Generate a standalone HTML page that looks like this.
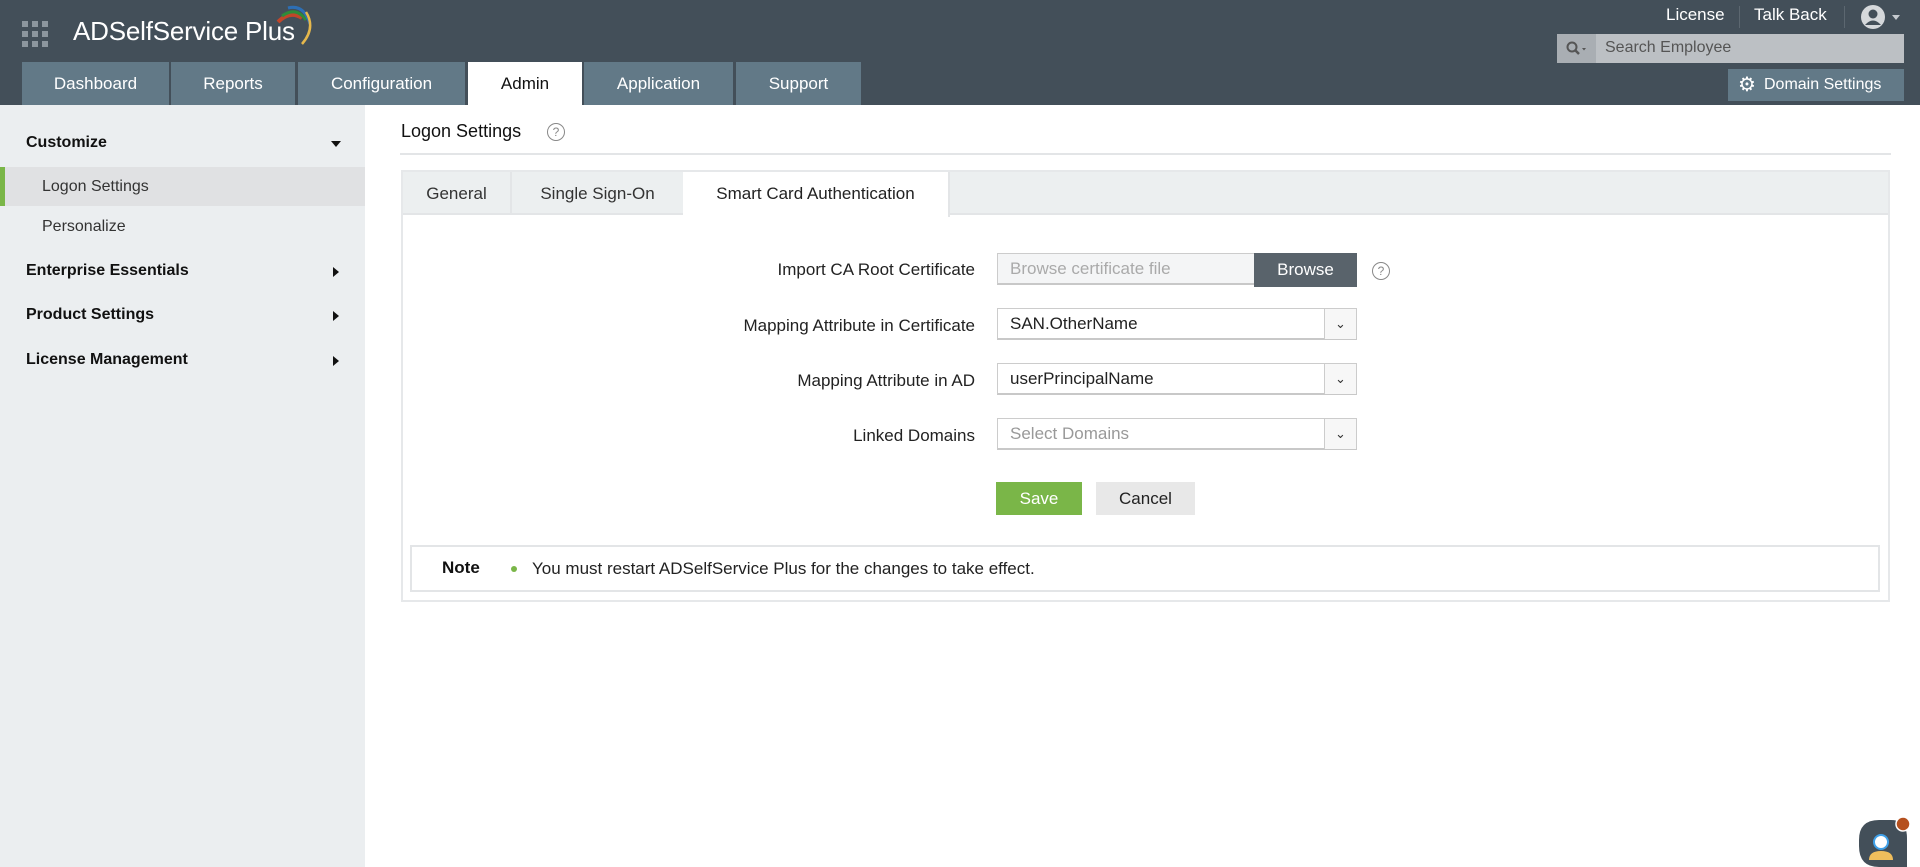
<!DOCTYPE html>
<html><head><meta charset="utf-8"><style>
*{box-sizing:border-box;margin:0;padding:0}
body{width:1920px;height:867px;overflow:hidden;font-family:"Liberation Sans",sans-serif;background:#fff;position:relative;color:#222}
.a{position:absolute}
#hdr{left:0;top:0;width:1920px;height:105px;background:#434f59}
.tab{position:absolute;top:62px;height:43px;background:#627987;color:#fff;font-size:17px;line-height:43px;text-align:center}
.side{left:0;top:105px;width:365px;height:762px;background:#ebeef0}
.si{position:absolute;left:26px;font-size:16px;font-weight:bold;color:#111}
.sub{position:absolute;left:42px;font-size:16px;color:#333}
.arr{position:absolute;left:333px;width:0;height:0;border-top:5px solid transparent;border-bottom:5px solid transparent;border-left:6px solid #111}
.lbl{position:absolute;right:945px;font-size:17px;color:#222;text-align:right;white-space:nowrap}
.inp{position:absolute;left:997px;width:360px;height:32px;border:1px solid #ccc;border-bottom:2px solid #c8c8c8;background:#fff;font-size:17px;line-height:30px;padding-left:12px}
.dd{position:absolute;right:0;top:0;width:32px;height:30px;border-left:1px solid #ccc;background:#f7f7f7;text-align:center;font-size:13px;line-height:30px;color:#333}
.ptab{position:absolute;top:172px;height:43px;font-size:17px;line-height:43px;text-align:center;color:#333}
</style></head><body>
<div id="hdr" class="a"></div>
<svg class="a" style="left:22px;top:21px" width="28" height="27" viewBox="0 0 28 27">
<g fill="#8c969e"><rect x="0" y="0" width="6" height="6"/><rect x="10" y="0" width="6" height="6"/><rect x="20" y="0" width="6" height="6"/><rect x="0" y="10" width="6" height="6"/><rect x="10" y="10" width="6" height="6"/><rect x="20" y="10" width="6" height="6"/><rect x="0" y="20" width="6" height="6"/><rect x="10" y="20" width="6" height="6"/><rect x="20" y="20" width="6" height="6"/></g></svg>
<div class="a" style="left:73px;top:16px;font-size:26px;color:#fff;letter-spacing:-0.2px">ADSelfService Plus</div>
<svg class="a" style="left:272px;top:4px" width="45" height="42" viewBox="0 0 45 42">
<path d="M6 18 Q18 6 30 14" stroke="#c0462a" stroke-width="4" fill="none"/>
<path d="M10 12 Q24 2 34 16" stroke="#2e8b3a" stroke-width="3" fill="none"/>
<path d="M16 4 Q32 0 38 20" stroke="#2d6fb5" stroke-width="3" fill="none"/>
<path d="M34 8 Q44 24 30 40" stroke="#e6b84c" stroke-width="2.5" fill="none"/>
</svg>
<div class="tab" style="left:22px;width:147px">Dashboard</div>
<div class="tab" style="left:171px;width:124px">Reports</div>
<div class="tab" style="left:298px;width:167px">Configuration</div>
<div class="tab" style="left:468px;width:114px;background:#fff;color:#111">Admin</div>
<div class="tab" style="left:584px;width:149px">Application</div>
<div class="tab" style="left:736px;width:125px">Support</div>
<div class="a" style="left:1666px;top:5px;font-size:17px;color:#fff">License</div>
<div class="a" style="left:1739px;top:6px;width:1px;height:22px;background:#5c6770"></div>
<div class="a" style="left:1754px;top:5px;font-size:17px;color:#fff">Talk Back</div>
<div class="a" style="left:1844px;top:6px;width:1px;height:22px;background:#5c6770"></div>
<svg class="a" style="left:1860px;top:4px" width="44" height="26" viewBox="0 0 44 26">
<circle cx="13" cy="13" r="12" fill="#d5d8db"/><circle cx="13" cy="10" r="4.5" fill="#434f59"/><path d="M5 21 Q13 12 21 21" fill="#434f59"/>
<path d="M32 11 L40 11 L36 16Z" fill="#c5cacf"/></svg>
<div class="a" style="left:1557px;top:34px;width:347px;height:29px;background:#bcc0c4"></div>
<div class="a" style="left:1557px;top:34px;width:39px;height:29px;background:#a9aeb3"></div>
<svg class="a" style="left:1566px;top:41px" width="24" height="16" viewBox="0 0 24 16"><circle cx="6" cy="6" r="4.5" stroke="#555" stroke-width="2" fill="none"/><path d="M9 9 L13 13" stroke="#555" stroke-width="2.5"/><path d="M16 7 L20 7 L18 9.5Z" fill="#555"/></svg>
<div class="a" style="left:1605px;top:39px;font-size:16px;color:#555">Search Employee</div>
<div class="a" style="left:1728px;top:69px;width:176px;height:32px;background:#627987;color:#fff;font-size:16px;line-height:32px;padding-left:36px">Domain Settings</div>
<div class="a" style="left:1738px;top:72px;color:#fff;font-size:20px">&#9881;</div>

<div class="a side"></div>
<div class="si" style="top:134px">Customize</div>
<div class="a" style="left:331px;top:141px;border-left:5px solid transparent;border-right:5px solid transparent;border-top:6px solid #111"></div>
<div class="a" style="left:0;top:167px;width:365px;height:39px;background:#e0e1e3"></div>
<div class="a" style="left:0;top:167px;width:5px;height:39px;background:#7ab648"></div>
<div class="sub" style="top:178px">Logon Settings</div>
<div class="sub" style="top:218px">Personalize</div>
<div class="si" style="top:262px">Enterprise Essentials</div><div class="arr" style="top:267px"></div>
<div class="si" style="top:306px">Product Settings</div><div class="arr" style="top:311px"></div>
<div class="si" style="top:351px">License Management</div><div class="arr" style="top:356px"></div>

<div class="a" style="left:401px;top:121px;font-size:18px;color:#111">Logon Settings</div>
<div class="a" style="left:547px;top:123px;width:18px;height:18px;border:1px solid #888;border-radius:50%;font-size:12px;line-height:16px;text-align:center;color:#888">?</div>
<div class="a" style="left:400px;top:153px;width:1491px;height:2px;background:#e3e5e7"></div>

<div class="a" style="left:401px;top:170px;width:1489px;height:432px;border:2px solid #e6e8ea"></div>
<div class="a" style="left:403px;top:172px;width:1485px;height:43px;background:#eceff0;border-bottom:2px solid #e3e5e7"></div>
<div class="ptab" style="left:403px;width:109px;border-right:2px solid #e3e5e7">General</div>
<div class="ptab" style="left:512px;width:171px">Single Sign-On</div>
<div class="ptab" style="left:683px;width:267px;background:#fff;height:45px;color:#222;border-right:2px solid #e3e5e7">Smart Card Authentication</div>

<div class="lbl" style="top:260px">Import CA Root Certificate</div>
<div class="inp" style="top:253px;background:#f4f5f6;color:#aaa;width:358px">Browse certificate file</div>
<div class="a" style="left:1254px;top:253px;width:103px;height:34px;background:#59636b;color:#fff;font-size:17px;line-height:34px;text-align:center">Browse</div>
<div class="a" style="left:1372px;top:262px;width:18px;height:18px;border:1px solid #888;border-radius:50%;font-size:12px;line-height:16px;text-align:center;color:#888">?</div>

<div class="lbl" style="top:316px">Mapping Attribute in Certificate</div>
<div class="inp" style="top:308px">SAN.OtherName<div class="dd">&#8964;</div></div>
<div class="lbl" style="top:371px">Mapping Attribute in AD</div>
<div class="inp" style="top:363px">userPrincipalName<div class="dd">&#8964;</div></div>
<div class="lbl" style="top:426px">Linked Domains</div>
<div class="inp" style="top:418px;color:#999">Select Domains<div class="dd">&#8964;</div></div>

<div class="a" style="left:996px;top:482px;width:86px;height:33px;background:#7ab648;color:#fff;font-size:17px;line-height:33px;text-align:center">Save</div>
<div class="a" style="left:1096px;top:482px;width:99px;height:33px;background:#e8e8e8;color:#222;font-size:17px;line-height:33px;text-align:center">Cancel</div>

<div class="a" style="left:410px;top:545px;width:1470px;height:47px;border:2px solid #e3e5e7"></div>
<div class="a" style="left:442px;top:558px;font-size:17px;font-weight:bold;color:#111">Note</div>
<div class="a" style="left:511px;top:566px;width:6px;height:6px;border-radius:50%;background:#7ab648"></div>
<div class="a" style="left:532px;top:559px;font-size:17px;color:#222">You must restart ADSelfService Plus for the changes to take effect.</div>

<svg class="a" style="left:1855px;top:810px" width="60" height="57" viewBox="0 0 60 57">
<path d="M4 30 Q4 10 24 10 L36 10 Q52 10 52 28 L52 57 L24 57 Q4 57 4 36Z" fill="#434f59"/>
<circle cx="26" cy="32" r="7" fill="#fff" stroke="#3fa0e8" stroke-width="2"/>
<path d="M14 50 Q14 41 26 41 Q38 41 38 50Z" fill="#f0be5c"/>
<circle cx="48" cy="14" r="7" fill="#b5501e" stroke="#fff" stroke-width="1.5"/>
</svg>
</body></html>
